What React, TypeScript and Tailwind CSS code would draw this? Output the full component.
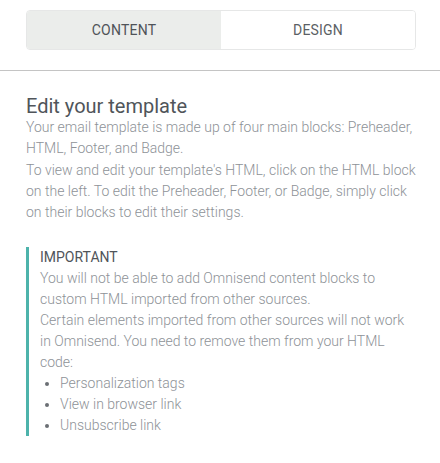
export default function App() {
  return (
    <div className="w-[440px] min-h-[463px] bg-white font-['Roboto',sans-serif]">
      {/* Tabs */}
      <div className="pt-[10px] pb-[20px] pl-[26px] pr-[24px]">
        <div className="flex h-[40px] rounded-[4px] border border-[#e6e7e7] overflow-hidden">
          <button className="flex-1 bg-[#ebedeb] text-[14px] text-[#4f5358] tracking-[0.2px]">
            CONTENT
          </button>
          <button className="flex-1 bg-white text-[14px] text-[#5b5f64] tracking-[0.2px]">
            DESIGN
          </button>
        </div>
      </div>
      <div className="h-px bg-[#c4c4c4]" />

      <div className="pt-[24px] pl-[26px] pr-[24px]">
        <h2 className="text-[20px] leading-[22px] text-[#50555a]">Edit your template</h2>
        <div className="text-[14px] leading-[21.3px] font-light text-[#8e9297]">
          <p>Your email template is made up of four main blocks: Preheader, HTML, Footer, and Badge.</p>
          <p>
            To view and edit your template's HTML, click on the HTML block on the left. To edit the Preheader, Footer,
            or Badge, simply click on their blocks to edit their settings.
          </p>
        </div>

        <div className="mt-[24px] border-l-[3px] border-[#4db3ab] pl-[11px] text-[14px] leading-[21px]">
          <p className="text-[#50555a]">IMPORTANT</p>
          <div className="font-light text-[#8e9297]">
            <p>You will not be able to add Omnisend content blocks to custom HTML imported from other sources.</p>
            <p>
              Certain elements imported from other sources will not work in Omnisend. You need to remove them from
              your HTML code:
            </p>
            <ul className="list-disc pl-[20px] marker:text-[#6b6f74]">
              <li>Personalization tags</li>
              <li>View in browser link</li>
              <li>Unsubscribe link</li>
            </ul>
          </div>
        </div>
      </div>
    </div>
  )
}
